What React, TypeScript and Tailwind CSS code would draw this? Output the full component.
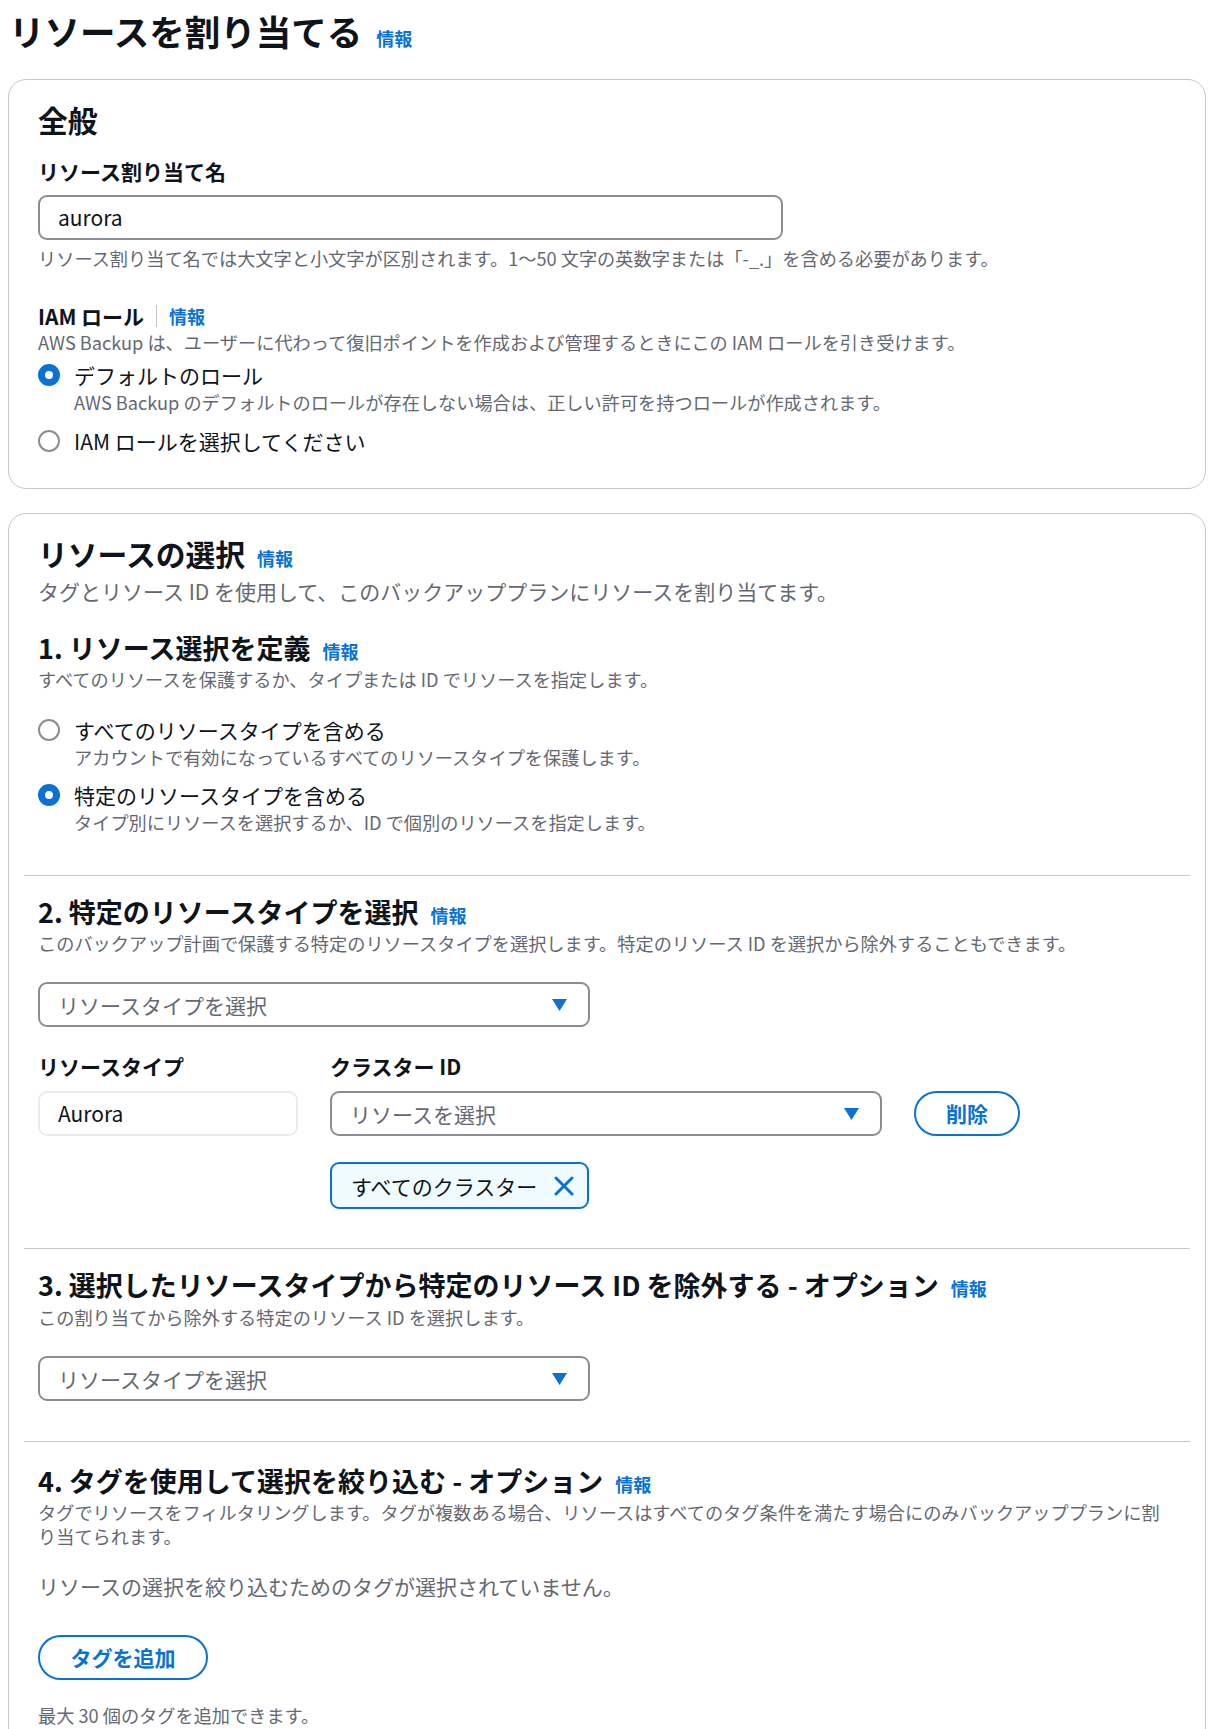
import React from "react";

const font = "font-['Noto_Sans_CJK_JP','Noto_Sans',sans-serif]";

function Info() {
  return (
    <span className="text-[18px] font-bold leading-[24px] text-[#0972d3]">
      情報
    </span>
  );
}

function Radio({ checked }: { checked: boolean }) {
  return checked ? (
    <span className="mt-[3px] inline-block h-[22px] w-[22px] shrink-0 rounded-full border-[7px] border-[#0972d3] bg-white" />
  ) : (
    <span className="mt-[3px] inline-block h-[22px] w-[22px] shrink-0 rounded-full border-[2.5px] border-[#8c8c94] bg-white" />
  );
}

function RadioOption({
  checked,
  label,
  desc,
  className,
}: {
  checked: boolean;
  label: string;
  desc?: string;
  className?: string;
}) {
  return (
    <div className={`flex gap-[14px] ${className ?? ""}`}>
      <Radio checked={checked} />
      <div>
        <div className="text-[21px] leading-[28px] text-[#0f141a]">{label}</div>
        {desc && (
          <div className="mt-[1px] text-[18.2px] leading-[24px] text-[#656871]">
            {desc}
          </div>
        )}
      </div>
    </div>
  );
}

function Caret() {
  return (
    <svg width="15" height="12" viewBox="0 0 15 12" className="shrink-0">
      <path d="M0 0 H15 L7.5 12 Z" fill="#0972d3" />
    </svg>
  );
}

function Select({ placeholder, className }: { placeholder: string; className?: string }) {
  return (
    <div
      className={`flex h-[45px] items-center justify-between rounded-[9px] border-2 border-[#8c8c94] bg-white pl-[18px] pr-[21px] ${className ?? ""}`}
    >
      <span className="text-[21px] leading-[28px] text-[#656871]">{placeholder}</span>
      <Caret />
    </div>
  );
}

function Divider() {
  return <div className="-mx-[14px] h-px bg-[#c6c6cd]" />;
}

function H3({ children }: { children: React.ReactNode }) {
  return (
    <div className="flex items-baseline gap-[12px]">
      <h3 className="text-[27px] font-bold leading-[34px] text-[#0f141a]">{children}</h3>
      <Info />
    </div>
  );
}

function Desc({ children, className }: { children: React.ReactNode; className?: string }) {
  return (
    <p className={`text-[18.2px] leading-[24px] text-[#656871] ${className ?? ""}`}>{children}</p>
  );
}

export default function App() {
  return (
    <div className={`${font} min-h-[1729px] bg-white pl-[8px] pr-[2px] pt-[8px] text-[#0f141a]`}>
      <div className="flex items-baseline gap-[14px] pl-[1px]">
        <h1 className="text-[35.5px] font-bold leading-[46px]">リソースを割り当てる</h1>
        <Info />
      </div>

      <section className="mt-[25px] rounded-[18px] border border-[#c6c6cd] px-[29px] pb-[33px] pt-[21px]">
        <h2 className="text-[29.8px] font-bold leading-[36px]">全般</h2>
        <div className="mt-[20px] text-[21px] font-bold leading-[28px]">リソース割り当て名</div>
        <div className="mt-[10px] flex h-[45px] w-[745px] items-center rounded-[9px] border-2 border-[#8c8c94] pl-[18px] text-[21px]">
          aurora
        </div>
        <Desc className="mt-[6px]">
          リソース割り当て名では大文字と小文字が区別されます。1〜50 文字の英数字または「-_.」を含める必要があります。
        </Desc>

        <div className="mt-[32px] flex items-center">
          <span className="text-[21px] font-bold leading-[28px]">IAM ロール</span>
          <span className="mx-[12px] h-[22px] w-px bg-[#c6c6cd]" />
          <Info />
        </div>
        <Desc>
          AWS Backup は、ユーザーに代わって復旧ポイントを作成および管理するときにこの IAM ロールを引き受けます。
        </Desc>
        <RadioOption
          className="mt-[7px]"
          checked
          label="デフォルトのロール"
          desc="AWS Backup のデフォルトのロールが存在しない場合は、正しい許可を持つロールが作成されます。"
        />
        <RadioOption className="mt-[13px]" checked={false} label="IAM ロールを選択してください" />
      </section>

      <section className="mt-[24px] rounded-[18px] border border-[#c6c6cd] px-[29px] pb-[40px] pt-[21px]">
        <div className="flex items-baseline gap-[12px]">
          <h2 className="text-[29.8px] font-bold leading-[36px]">リソースの選択</h2>
          <Info />
        </div>
        <p className="mt-[6px] text-[21px] leading-[28px] text-[#656871]">
          タグとリソース ID を使用して、このバックアッププランにリソースを割り当てます。
        </p>

        <div className="mt-[26px]">
          <H3>1. リソース選択を定義</H3>
        </div>
        <Desc className="mt-[2px]">
          すべてのリソースを保護するか、タイプまたは ID でリソースを指定します。
        </Desc>
        <RadioOption
          className="mt-[25px]"
          checked={false}
          label="すべてのリソースタイプを含める"
          desc="アカウントで有効になっているすべてのリソースタイプを保護します。"
        />
        <RadioOption
          className="mt-[12px]"
          checked
          label="特定のリソースタイプを含める"
          desc="タイプ別にリソースを選択するか、ID で個別のリソースを指定します。"
        />

        <div className="mt-[41px]">
          <Divider />
        </div>

        <div className="mt-[19px]">
          <H3>2. 特定のリソースタイプを選択</H3>
        </div>
        <Desc className="mt-[2px]">
          このバックアップ計画で保護する特定のリソースタイプを選択します。特定のリソース ID を選択から除外することもできます。
        </Desc>
        <Select className="mt-[27px] w-[552px]" placeholder="リソースタイプを選択" />

        <div className="mt-[25px] flex gap-[32px]">
          <div className="w-[260px]">
            <div className="text-[21px] font-bold leading-[28px]">リソースタイプ</div>
            <div className="mt-[11px] flex h-[45px] items-center rounded-[9px] border-2 border-[#e9ebed] pl-[18px] text-[21px]">
              Aurora
            </div>
          </div>
          <div className="w-[552px]">
            <div className="text-[21px] font-bold leading-[28px]">クラスター ID</div>
            <Select className="mt-[11px]" placeholder="リソースを選択" />
            <div className="mt-[26px] flex h-[47px] w-[259px] items-center justify-between rounded-[9px] border-2 border-[#0972d3] bg-[#f0fbff] pl-[19px] pr-[13px]">
              <span className="text-[21px] leading-[28px]">すべてのクラスター</span>
              <svg width="20" height="20" viewBox="0 0 20 20">
                <path d="M2 2 L18 18 M18 2 L2 18" stroke="#0972d3" strokeWidth="3" strokeLinecap="round" />
              </svg>
            </div>
          </div>
          <div className="pt-[39px]">
            <button className="h-[45px] w-[106px] rounded-full border-2 border-[#0972d3] text-[21px] font-bold text-[#0972d3]">
              削除
            </button>
          </div>
        </div>

        <div className="mt-[39px]">
          <Divider />
        </div>

        <div className="mt-[19px]">
          <H3>3. 選択したリソースタイプから特定のリソース ID を除外する - オプション</H3>
        </div>
        <Desc className="mt-[3px]">この割り当てから除外する特定のリソース ID を選択します。</Desc>
        <Select className="mt-[27px] w-[552px]" placeholder="リソースタイプを選択" />

        <div className="mt-[40px]">
          <Divider />
        </div>

        <div className="mt-[22px]">
          <H3>4. タグを使用して選択を絞り込む - オプション</H3>
        </div>
        <Desc className="mt-[2px] pr-[14px]">
          タグでリソースをフィルタリングします。タグが複数ある場合、リソースはすべてのタグ条件を満たす場合にのみバックアッププランに割り当てられます。
        </Desc>
        <p className="mt-[24px] text-[21px] leading-[28px] text-[#656871]">
          リソースの選択を絞り込むためのタグが選択されていません。
        </p>
        <button className="mt-[35px] h-[45px] w-[170px] rounded-full border-2 border-[#0972d3] text-[21px] font-bold text-[#0972d3]">
          タグを追加
        </button>
        <Desc className="mt-[23px]">最大 30 個のタグを追加できます。</Desc>
      </section>
    </div>
  );
}
